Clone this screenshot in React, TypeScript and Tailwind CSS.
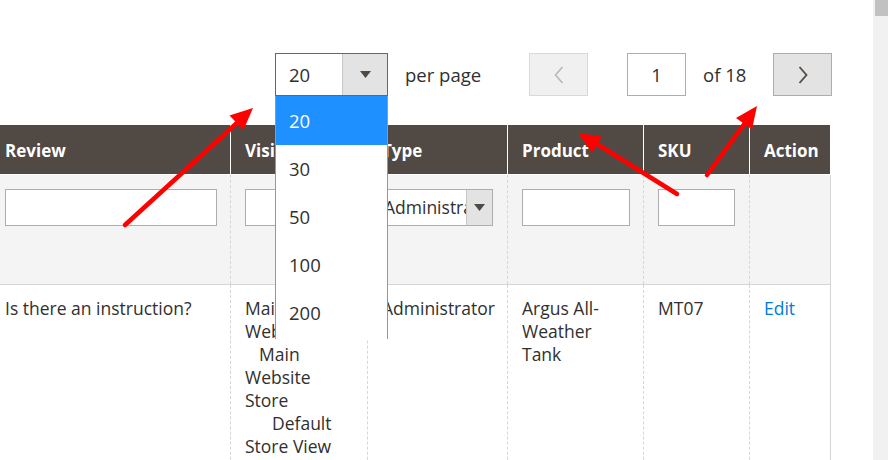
import React from "react";

function Tri() {
  return (
    <svg width="11" height="7" viewBox="0 0 11 7">
      <polygon points="0,0 11,0 5.5,7" fill="#514943" />
    </svg>
  );
}

function Arrows() {
  return (
    <svg className="pointer-events-none absolute left-0 top-0 z-20" width="888" height="460" viewBox="0 0 888 460">
      <g stroke="#ff0000" strokeWidth="4.5" strokeLinecap="round" fill="#ff0000">
        <line x1="125" y1="225" x2="238" y2="122" />
        <line x1="677" y1="194" x2="597" y2="144" />
        <line x1="707" y1="175" x2="745" y2="123" />
      </g>
      <g fill="#ff0000">
        <polygon points="253,108 243.5,130 229.5,115.5" />
        <polygon points="578,133 602,136.5 592,152.5" />
        <polygon points="757,106 752,129.5 736,118" />
      </g>
    </svg>
  );
}

export default function App() {
  const cols = "grid grid-cols-[230px_137px_140px_136px_106px_81px]";
  const dashL = "border-l border-dashed border-[#d6d6d6]";
  return (
    <div className="relative flex h-[460px] w-[888px] overflow-hidden bg-white font-['Open_Sans',sans-serif] text-[17.5px] text-[#303030]">
      <div className="flex w-[873px] shrink-0 flex-col">
        {/* toolbar */}
        <div className="relative z-10 flex h-[125px] shrink-0 items-start pl-[275px] pt-[53px] text-[18.5px]">
          <div className="relative flex h-[43px] w-[113px] border border-[#3b6fb0]">
            <div className="flex flex-1 items-center pl-[13px]">20</div>
            <div className="flex w-[45px] items-center justify-center border-l border-[#c8c8c8] bg-[#e3e3e3]">
              <Tri />
            </div>
            <div className="absolute left-[-1px] top-[42px] z-10 flex h-[243px] w-[113px] flex-col overflow-hidden border-x border-[#7f9db9] bg-white">
              <div className="flex h-[49px] shrink-0 items-center bg-[#1e90ff] pl-[13px] text-white">20</div>
              <div className="flex h-[48px] shrink-0 items-center pl-[13px]">30</div>
              <div className="flex h-[48px] shrink-0 items-center pl-[13px]">50</div>
              <div className="flex h-[48px] shrink-0 items-center pl-[13px]">100</div>
              <div className="flex h-[48px] shrink-0 items-center pl-[13px]">200</div>
            </div>
          </div>
          <div className="flex h-[43px] w-[141px] items-center pl-[17px]">per page</div>
          <div className="flex h-[43px] w-[59px] items-center justify-center border border-[#d9d9d9] bg-[#f0f0f0]">
            <svg width="10" height="18" viewBox="0 0 10 18">
              <polyline points="8.5,1 1.5,9 8.5,17" fill="none" stroke="#b8b8b8" strokeWidth="1.6" />
            </svg>
          </div>
          <div className="ml-[39px] flex h-[43px] w-[59px] items-center justify-center border border-[#adadad] bg-white">1</div>
          <div className="flex h-[43px] w-[87px] items-center pl-[17px]">of 18</div>
          <div className="flex h-[43px] w-[59px] items-center justify-center border border-[#adadad] bg-[#e3e3e3]">
            <svg width="10" height="18" viewBox="0 0 10 18">
              <polyline points="1.5,1 8.5,9 1.5,17" fill="none" stroke="#514943" strokeWidth="1.8" />
            </svg>
          </div>
        </div>

        {/* header */}
        <div className={`${cols} h-[50px] shrink-0 border-b border-white text-[17px] font-bold text-white`}>
          <div className="flex items-center bg-[#514943] pl-[5px] pt-[2px]">Review</div>
          <div className="flex items-center border-l border-white bg-[#514943] pl-[14px] pt-[2px]">Visibility</div>
          <div className="flex items-center border-l border-white bg-[#514943] pl-[14px] pt-[2px]">Type</div>
          <div className="flex items-center border-l border-white bg-[#514943] pl-[14px] pt-[2px]">Product</div>
          <div className="flex items-center border-l border-white bg-[#514943] pl-[14px] pt-[2px]">SKU</div>
          <div className="flex items-center border-l border-white bg-[#514943] pl-[14px] pt-[2px]">Action</div>
        </div>

        <div className="w-[831px] shrink-0 border-r border-[#d6d6d6]">
          {/* filters */}
          <div className={`${cols} h-[110px] border-b border-[#d6d6d6] bg-[#f4f4f4]`}>
            <div className="pl-[5px] pt-[14px]">
              <div className="h-[37px] w-[212px] border border-[#adadad] bg-white" />
            </div>
            <div className={`${dashL} pl-[14px] pt-[14px]`}>
              <div className="h-[37px] w-[107px] border border-solid border-[#adadad] bg-white" />
            </div>
            <div className={`${dashL} pl-[14px] pt-[14px]`}>
              <div className="flex h-[37px] w-[111px] overflow-hidden border border-solid border-[#adadad] bg-white">
                <div className="flex-1 overflow-hidden whitespace-nowrap pl-[1px] leading-[35px]">Administrator</div>
                <div className="flex w-[26px] shrink-0 items-center justify-center border-l border-solid border-[#c8c8c8] bg-[#e3e3e3]">
                  <Tri />
                </div>
              </div>
            </div>
            <div className={`${dashL} pl-[14px] pt-[14px]`}>
              <div className="h-[37px] w-[108px] border border-solid border-[#adadad] bg-white" />
            </div>
            <div className={`${dashL} pl-[14px] pt-[14px]`}>
              <div className="h-[37px] w-[77px] border border-solid border-[#adadad] bg-white" />
            </div>
            <div className={dashL} />
          </div>

          {/* body */}
          <div className={`${cols} h-[200px] leading-[23px]`}>
            <div className="pl-[5px] pt-[12px]">Is there an instruction?</div>
            <div className={`${dashL} pl-[14px] pt-[12px]`}>
              <div>Main</div>
              <div>Website</div>
              <div className="pl-[14px]">Main</div>
              <div>Website</div>
              <div>Store</div>
              <div className="pl-[27px]">Default</div>
              <div>Store View</div>
            </div>
            <div className={`${dashL} pl-[14px] pt-[12px]`}>Administrator</div>
            <div className={`${dashL} pl-[14px] pt-[12px]`}>
              <div>Argus All-</div>
              <div>Weather</div>
              <div>Tank</div>
            </div>
            <div className={`${dashL} pl-[14px] pt-[12px]`}>MT07</div>
            <div className={`${dashL} pl-[14px] pt-[12px] text-[#007bdb]`}>Edit</div>
          </div>
        </div>
      </div>

      {/* scrollbar */}
      <div className="flex w-[15px] shrink-0 flex-col bg-[#f1f1f1]">
        <div className="ml-[2px] h-[16px] bg-[#c1c1c1]" />
      </div>

      <Arrows />
    </div>
  );
}
